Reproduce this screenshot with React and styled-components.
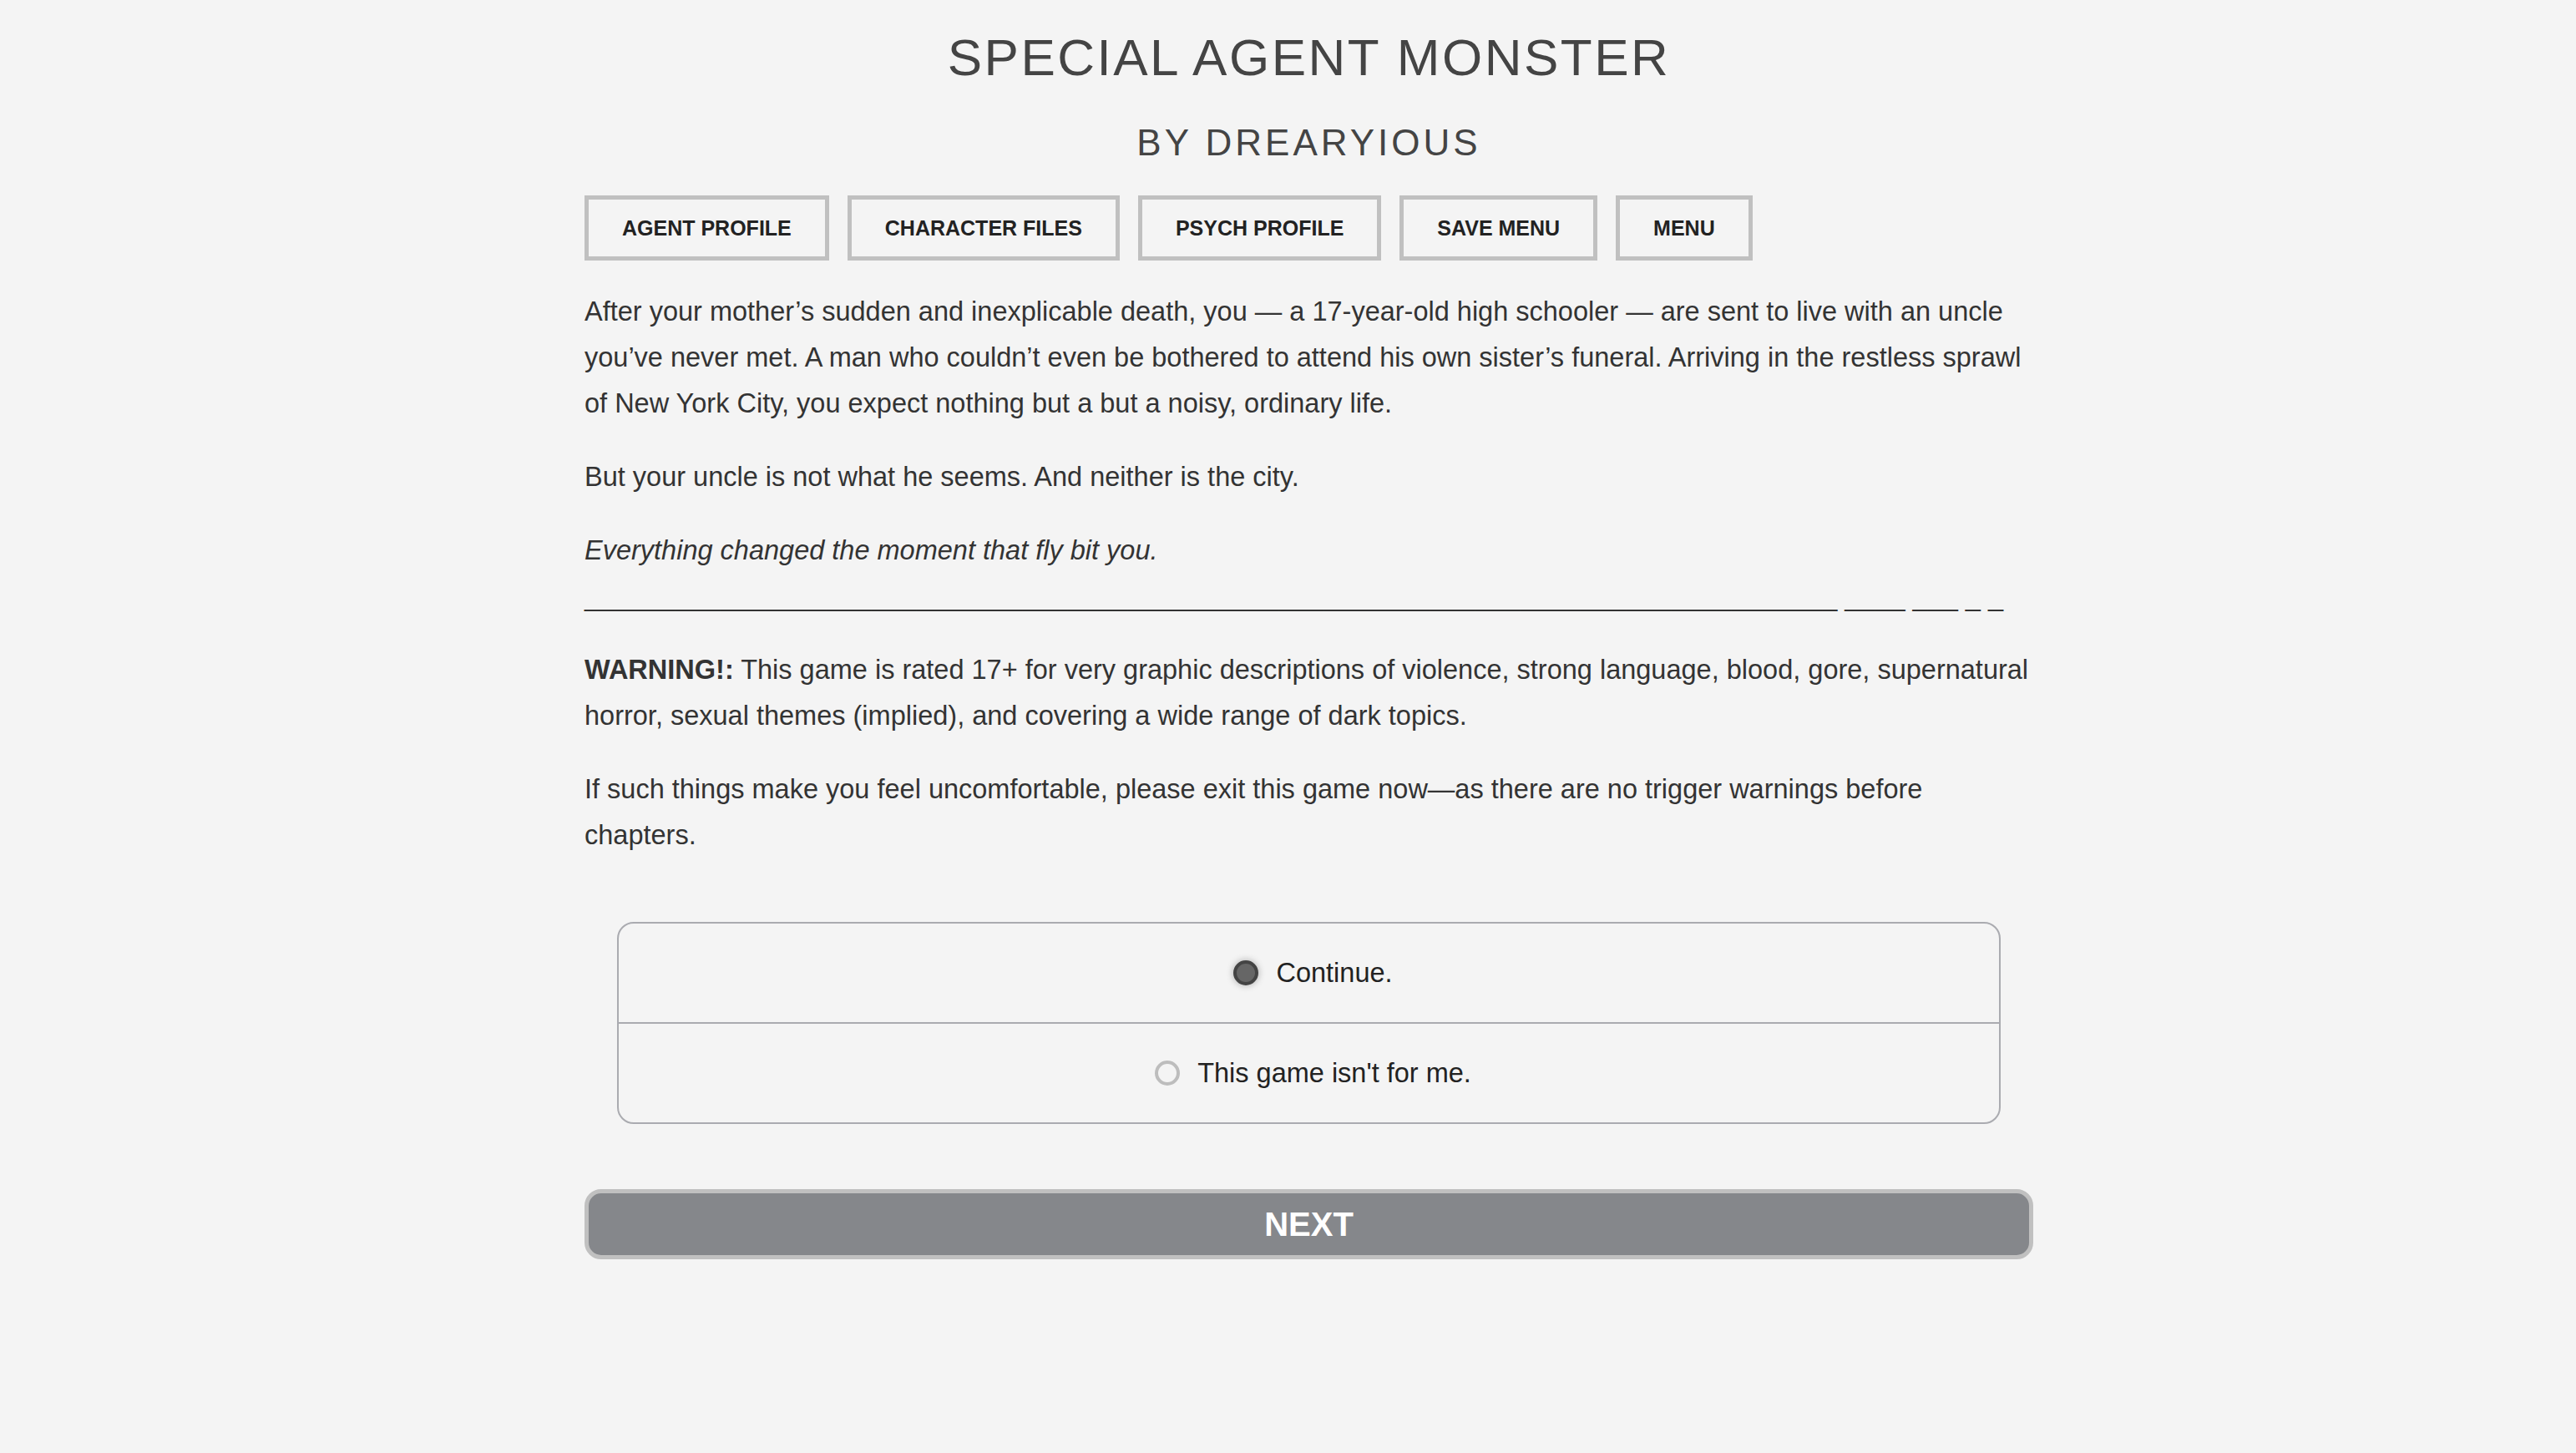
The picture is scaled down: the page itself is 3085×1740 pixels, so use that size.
import React, { useState } from 'react';
import styled, { createGlobalStyle } from 'styled-components';

const GlobalStyle = createGlobalStyle`
    html, body {
        margin: 0;
        padding: 0;
        background: #f4f4f4;
    }

    body {
        font-family: "Liberation Sans", Arial, sans-serif;
        color: #333;
    }
`;

const navItems = ['Agent Profile', 'Character Files', 'Psych Profile', 'Save Menu', 'Menu'];

const choices = [
    { id: 'continue', label: 'Continue.' },
    { id: 'leave', label: "This game isn't for me." },
];

const divider = '_'.repeat(83) + ' ____ ___ _ _';

const App = () => {
    const [picked, setPicked] = useState('continue');

    return <>
        <GlobalStyle />
        <Page>
            <Header>
                <Title>Special Agent Monster</Title>
                <Byline>By Drearyious</Byline>
            </Header>

            <Nav>
                {navItems.map(item => <NavButton key={item}>{item}</NavButton>)}
            </Nav>

            <Story>
                <p>After your mother’s sudden and inexplicable death, you — a 17-year-old high schooler — are sent to live with an uncle you’ve never met. A man who couldn’t even be bothered to attend his own sister’s funeral. Arriving in the restless sprawl of New York City, you expect nothing but a but a noisy, ordinary life.</p>
                <p>But your uncle is not what he seems. And neither is the city.</p>
                <p><em>Everything changed the moment that fly bit you.</em><br />{divider}</p>
                <p><strong>WARNING!:</strong> This game is rated 17+ for very graphic descriptions of violence, strong language, blood, gore, supernatural horror, sexual themes (implied), and covering a wide range of dark topics.</p>
                <p>If such things make you feel uncomfortable, please exit this game now—as there are no trigger warnings before chapters.</p>
            </Story>

            <ChoiceList>
                {choices.map(choice => (
                    <ChoiceRow key={choice.id} onClick={() => setPicked(choice.id)}>
                        <Radio $checked={picked === choice.id} />
                        <span>{choice.label}</span>
                    </ChoiceRow>
                ))}
            </ChoiceList>

            <NextButton>Next</NextButton>
        </Page>
    </>;
};

const Page = styled.main`
    box-sizing: border-box;
    width: 1785px;
    margin: 0 auto;
    padding: 33px 0 120px 50px;
`;

const Header = styled.header`
    text-align: center;
    color: #444;
    text-transform: uppercase;
`;

const Title = styled.h1`
    margin: 0;
    font-size: 62px;
    font-weight: normal;
    line-height: 72px;
    letter-spacing: 2.5px;
`;

const Byline = styled.h2`
    margin: 40px 0 0;
    font-size: 44px;
    font-weight: normal;
    line-height: 52px;
    letter-spacing: 4px;
`;

const Nav = styled.nav`
    display: flex;
    gap: 22px;
    margin-top: 37px;
`;

const NavButton = styled.button`
    height: 78px;
    padding: 0 40px;
    border: 5px solid #c0c0c0;
    background: transparent;
    color: #222;
    font-family: inherit;
    font-size: 25px;
    font-weight: bold;
    text-transform: uppercase;
    cursor: pointer;
`;

const Story = styled.section`
    margin-top: 34px;

    p {
        margin: 0 0 33px;
        font-size: 32.5px;
        line-height: 55px;
        color: #333;
    }
`;

const ChoiceList = styled.ul`
    list-style: none;
    margin: 76px 39px 0;
    padding: 0;
    border: 2px solid #aaabb0;
    border-radius: 20px;
`;

const ChoiceRow = styled.li`
    display: flex;
    justify-content: center;
    align-items: center;
    gap: 21px;
    height: 118px;
    font-size: 32.5px;
    color: #222;
    cursor: pointer;

    & + & {
        border-top: 2px solid #aaabb0;
    }
`;

const Radio = styled.span`
    box-sizing: border-box;
    width: 30px;
    height: 30px;
    margin-left: 10px;
    border-radius: 50%;
    border: 4px solid ${p => p.$checked ? '#444' : '#bdbdbd'};
    background: ${p => p.$checked ? '#666' : 'transparent'};
    box-shadow: ${p => p.$checked ? '0 0 8px rgba(0, 0, 0, 0.3)' : 'none'};
`;

const NextButton = styled.button`
    display: block;
    width: 100%;
    height: 84px;
    margin-top: 78px;
    border: 5px solid #c0c0c0;
    border-radius: 20px;
    background: #85878b;
    color: #fff;
    font-family: inherit;
    font-size: 40px;
    font-weight: bold;
    text-transform: uppercase;
    cursor: pointer;
`;

export default App;
